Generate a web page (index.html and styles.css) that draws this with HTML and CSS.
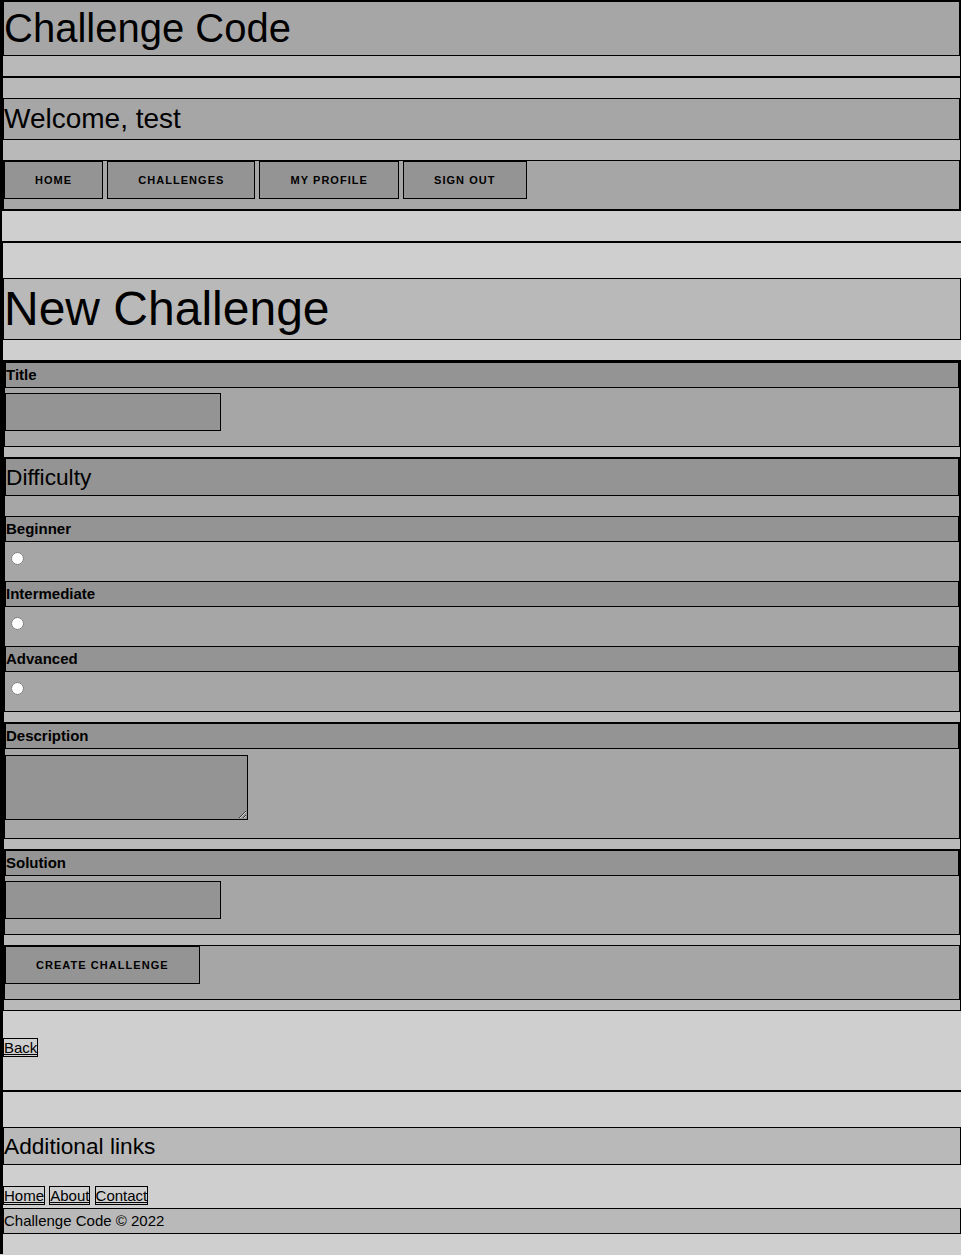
FILE: index.html
```html
<!DOCTYPE html>
<html lang="en">
<head>
    <meta charset="UTF-8">
    <title>New Challenge - Challenge Code</title>
    <link rel="stylesheet" href="styles.css">
</head>
<body>
<header class="site-header">
    <div class="brand">
        <h1 class="brand-title">Challenge Code</h1>
    </div>
    <div class="account">
        <h2 class="welcome">Welcome, test</h2>
        <nav class="nav">
            <a class="btn" href="#">Home</a>
            <a class="btn" href="#">Challenges</a>
            <a class="btn" href="#">My Profile</a>
            <a class="btn" href="#">Sign Out</a>
        </nav>
    </div>
</header>
<main class="main">
    <h1 class="page-title">New Challenge</h1>
    <form class="form" action="#">
        <div class="field">
            <label class="field-label" for="title">Title</label>
            <input class="text-input" type="text" id="title" name="title">
        </div>
        <div class="field">
            <h3 class="field-heading">Difficulty</h3>
            <div class="option">
                <label class="field-label" for="beginner">Beginner</label>
                <input class="radio" type="radio" id="beginner" name="difficulty" value="beginner">
            </div>
            <div class="option">
                <label class="field-label" for="intermediate">Intermediate</label>
                <input class="radio" type="radio" id="intermediate" name="difficulty" value="intermediate">
            </div>
            <div class="option">
                <label class="field-label" for="advanced">Advanced</label>
                <input class="radio" type="radio" id="advanced" name="difficulty" value="advanced">
            </div>
        </div>
        <div class="field">
            <label class="field-label" for="description">Description</label>
            <textarea class="text-area" id="description" name="description"></textarea>
        </div>
        <div class="field">
            <label class="field-label" for="solution">Solution</label>
            <input class="text-input" type="text" id="solution" name="solution">
        </div>
        <div class="field field-submit">
            <button class="btn" type="submit">Create Challenge</button>
        </div>
    </form>
    <p class="back"><a class="link" href="#">Back</a></p>
</main>
<footer class="site-footer">
    <h2 class="footer-title">Additional links</h2>
    <p class="footer-links">
        <a class="link" href="#">Home</a>
        <a class="link" href="#">About</a>
        <a class="link" href="#">Contact</a>
    </p>
    <p class="copyright">Challenge Code &copy; 2022</p>
</footer>
</body>
</html>
```

FILE: styles.css
```css
*{
    margin: 0;
    padding: 0;
    box-sizing: border-box;
}
body{
    font-family: "Liberation Sans", Arial, sans-serif;
    font-size: 15px;
    color: #000;
    background: #cfcfcf;
    border-left: 2px solid #000;
}

/* header */
.site-header{
    margin-bottom: 30px;
}
.brand{
    height: 77px;
    background: #b9b9b9;
    border: 1px solid #000;
}
.brand-title{
    font-size: 40px;
    font-weight: normal;
    line-height: 53px;
    background: #a6a6a6;
    border: 1px solid #000;
}
.account{
    padding-top: 20px;
    background: #b9b9b9;
    border: 1px solid #000;
}
.welcome{
    font-size: 28px;
    font-weight: normal;
    line-height: 40px;
    background: #a6a6a6;
    border: 1px solid #000;
    margin-bottom: 20px;
}
.nav{
    display: flex;
    gap: 4px;
    padding-bottom: 10px;
    background: #a6a6a6;
    border: 1px solid #000;
}

/* buttons */
.btn{
    display: block;
    height: 38px;
    padding: 0 30px;
    font-family: "Liberation Sans", Arial, sans-serif;
    font-size: 11px;
    font-weight: bold;
    line-height: 36px;
    letter-spacing: 1.05px;
    text-transform: uppercase;
    text-decoration: none;
    color: #000;
    background: #949494;
    border: 1px solid #000;
    border-radius: 0;
    cursor: pointer;
}

/* main */
.main{
    border-left: 1px solid #000;
    border-top: 2px solid #000;
    border-bottom: 1px solid #000;
    padding-top: 35px;
}
.page-title{
    font-size: 48px;
    font-weight: normal;
    line-height: 60px;
    background: #b9b9b9;
    border: 1px solid #000;
    margin-bottom: 20px;
}
.form{
    background: #b9b9b9;
    border: 1px solid #000;
    padding-bottom: 10px;
}
.field{
    background: #a6a6a6;
    border: 1px solid #000;
    margin-bottom: 10px;
}
.field:last-child{
    margin-bottom: 0;
}
.field-label{
    display: block;
    font-weight: bold;
    line-height: 24px;
    background: #949494;
    border: 1px solid #000;
}
.field-heading{
    font-size: 22.7px;
    font-weight: normal;
    line-height: 36px;
    background: #949494;
    border: 1px solid #000;
    margin-bottom: 20px;
}
.text-input{
    display: block;
    width: 216px;
    height: 38px;
    margin: 5px 0 15px;
    background: #949494;
    border: 1px solid #000;
}
.text-area{
    display: block;
    width: 243px;
    height: 65px;
    margin: 6px 0 18px;
    background: #949494;
    border: 1px solid #000;
}
.radio{
    display: block;
    width: 13px;
    height: 13px;
    margin: 10px 0 16px 6px;
}
.field-submit{
    padding-bottom: 15px;
}

/* links */
.link{
    color: #000;
    text-decoration: underline;
    border: 1px solid #000;
}
.back{
    line-height: 17px;
    margin: 28px 0 34px;
}

/* footer */
.site-footer{
    border-left: 1px solid #000;
    border-top: 1px solid #000;
    padding: 35px 0 20px;
}
.footer-title{
    font-size: 22.7px;
    font-weight: normal;
    line-height: 36px;
    background: #b9b9b9;
    border: 1px solid #000;
    margin-bottom: 22px;
}
.footer-links{
    line-height: 17px;
    margin-bottom: 4px;
}
.copyright{
    line-height: 24px;
    background: #b9b9b9;
    border: 1px solid #000;
}
```
